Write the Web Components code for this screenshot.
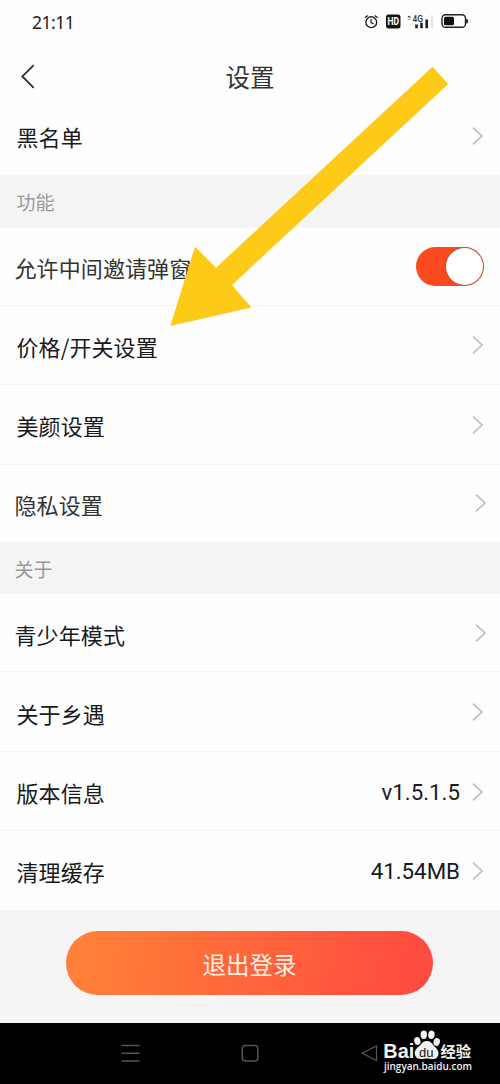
<!DOCTYPE html>
<html lang="zh-CN">
<head>
<meta charset="utf-8">
<title>设置</title>
<style>
html,body{margin:0;padding:0}
body{width:500px;height:1084px;overflow:hidden;background:#fefefe;font-family:Roboto,"Noto Sans CJK SC",sans-serif;color:#17191f}
</style>
</head>
<body>
<settings-screen></settings-screen>
<script>
const define = (name, html, setup) => {
  const template = document.createElement('template');
  template.innerHTML = html;
  customElements.define(name, class extends HTMLElement {
    constructor() {
      super();
      this.attachShadow({mode: 'open'}).append(template.content.cloneNode(true));
    }
    connectedCallback() { if (setup) setup(this); }
  });
};

define('status-bar', `
<style>
:host{display:flex;align-items:center;justify-content:space-between;height:44px;padding:0 31px 0 32px;box-sizing:border-box;color:#222}
.time{font:17.5px/20px "Noto Sans",sans-serif;letter-spacing:-.5px}
svg{display:block}
</style>
<span class="time">21:11</span>
<svg width="106" height="20" viewBox="363 13 106 20" fill="none" stroke="#222">
  <circle cx="371.3" cy="23.2" r="5.4" stroke-width="1.4"/>
  <path d="M371 20v3.5l2.7 1.500M365 18.700l2.800-2.300M377.600 18.700l-2.800-2.300" stroke-width="1.300"/>
  <rect x="386" y="15.500" width="14.500" height="14" rx="2.500" fill="#151515" stroke="none"/>
  <text x="393.200" y="26.200" text-anchor="middle" font-family="Roboto" font-weight="700" font-size="10" textLength="11.500" lengthAdjust="spacingAndGlyphs" fill="#fff" stroke="none">HD</text>
  <path d="M407.300 18.500l1.900-2 1.900 2z" fill="#333" stroke="none"/>
  <path d="M407.800 20.600h2.800" stroke="#aaa"/>
  <text x="412.500" y="22.500" font-family="Roboto" font-weight="500" font-size="9.300" textLength="10.500" lengthAdjust="spacingAndGlyphs" fill="#333" stroke="none">4G</text>
  <path d="M416.500 25.500v3.700M421.500 23.700v5.500M426.700 20.500v8.700" stroke-width="2.600"/>
  <path d="M432 16v13" stroke="#ddd" stroke-width="1.600"/>
  <rect x="442" y="15.800" width="23.500" height="12.500" rx="3.600" stroke-width="1.400"/>
  <rect x="444" y="17.800" width="10" height="8.500" rx="1.500" fill="#111" stroke="none"/>
  <path d="M467 20.200v4" stroke-width="1.800"/>
</svg>`);

define('nav-header', `
<style>
:host{display:grid;grid-template-columns:60px 1fr 60px;align-items:center;height:53px;padding-top:13px;box-sizing:border-box}
svg{display:block;margin-left:20px}
h1{margin:0;padding-top:1px;text-align:center;font:400 24.5px/36px "Noto Sans CJK SC",sans-serif;color:#333}
</style>
<svg width="16" height="26" viewBox="0 0 16 26" fill="none" stroke="#333" stroke-width="1.9" stroke-linecap="round"><path d="M13.2 1.6L2.4 12.4l10.8 10.9"/></svg>
<h1><slot></slot></h1>`);

define('section-label', `
<style>
:host{display:flex;align-items:center;height:53px;padding:2px 0 0 var(--inset,16.5px);box-sizing:border-box;background:#f5f5f5;color:#999;font:19px/28px "Noto Sans CJK SC",sans-serif}
</style>
<slot></slot>`);

define('chevron-icon', `
<style>:host{display:block;width:12px;height:20px}svg{display:block}</style>
<svg width="12" height="20" viewBox="0 0 12 20" fill="none" stroke="#bdbdbd" stroke-width="1.6"><path d="M1 1.6l9 8.4-9 8.4"/></svg>`);

define('toggle-switch', `
<style>
:host{display:flex;justify-content:flex-end;width:68px;height:39px;padding:1px;border-radius:20px;box-sizing:border-box;background:#fb4a20}
i{display:block;width:37px;height:37px;border-radius:50%;background:#fff;box-shadow:0 0 0 .7px #a8553e}
</style><i></i>`);

define('setting-row', `
<style>
:host{display:flex;align-items:center;height:79px;padding:1px var(--end,16px) 0 var(--inset,16.5px);box-sizing:border-box;border-bottom:1px solid #f3f3f3}
:host([last]){border-bottom-color:transparent}
.label{flex:1;padding-top:1px;white-space:nowrap;font:22px/32px "Noto Sans CJK SC",sans-serif;letter-spacing:.1px}
.value{margin-right:12px;padding-top:1px;font-size:22.3px;line-height:32px}
</style>
<span class="label"><slot></slot></span><span class="value"></span><slot name="control"><chevron-icon></chevron-icon></slot>`,
el => { el.shadowRoot.querySelector('.value').textContent = el.getAttribute('value') || ''; });

define('logout-button', `
<style>
:host{display:flex;justify-content:center;height:113px;padding:21px 1px 0 0;box-sizing:border-box;background:#f5f5f5}
button{width:367px;height:64px;padding:1px 0 0;border:0;border-radius:32px;background:linear-gradient(100deg,#ff8038 5%,#ff4b40 95%);color:#fff0e4;font:23.5px/34px "Noto Sans CJK SC",sans-serif}
</style>
<button><slot></slot></button>`);

define('system-nav', `
<style>:host{display:block;height:61px;background:#000}svg{display:block}</style>
<svg width="500" height="61" viewBox="0 1023 500 61" fill="none" stroke="#555" stroke-width="1.5">
  <path d="M121.500 1045.500h18M121.500 1053.300h18M121.500 1061h18"/>
  <rect x="242.300" y="1045.500" width="15.500" height="15.500" rx="3"/>
  <path d="M376.500 1046v14.600l-14.500-7.300z" stroke-width="1.200"/>
  <g stroke="none" fill="#f2f2f2">
    <text x="383.300" y="1057.500" font-family="Liberation Sans" font-weight="700" font-size="20" textLength="31" lengthAdjust="spacingAndGlyphs">Bai</text>
    <ellipse cx="417.300" cy="1041" rx="3.100" ry="3.900" transform="rotate(-15 417.300 1041)"/>
    <ellipse cx="423.800" cy="1034.700" rx="3.200" ry="4.200"/>
    <ellipse cx="431.400" cy="1034.800" rx="3.200" ry="4.200" transform="rotate(8 431.400 1034.800)"/>
    <ellipse cx="436.700" cy="1042" rx="3.200" ry="3.900" transform="rotate(15 436.700 1042)"/>
    <path d="M427 1041c3 0 4.800 1.800 6.200 4 2.300 2.800 5.300 4.300 5.300 8.200 0 3.500-2.300 5.800-5.700 5.800-2.200 0-3.500-.6-5.900-.6s-3.800.6-6.200.6c-3.700 0-5.900-2.400-5.900-5.900 0-4 3.300-5.500 5.700-8.300 1.600-2.200 3.500-3.800 6.500-3.800z"/>
    <text x="419" y="1056.500" font-family="Liberation Sans" font-weight="400" font-size="13.500" textLength="14.500" lengthAdjust="spacingAndGlyphs" fill="#111">du</text>
    <text x="440.400" y="1056.500" font-family="Liberation Sans, Noto Sans CJK SC, sans-serif" font-weight="700" font-size="15.300">经验</text>
    <text x="384" y="1069.700" font-family="Open Sans" font-weight="600" font-size="11.200" textLength="88" lengthAdjust="spacingAndGlyphs">jingyan.baidu.com</text>
  </g>
</svg>`);

define('pointer-arrow', `
<style>:host{position:absolute;left:170px;top:66px;pointer-events:none}svg{display:block}</style>
<svg width="280" height="262" viewBox="170 66 280 262"><path d="M170.300 326L195 246.700l21 21L432.600 66.700 448.200 83.900 232 285l19.400 22.400z" fill="#fdca18"/></svg>`);

define('settings-screen', `
<style>
:host{display:flex;flex-direction:column;position:relative;width:500px;height:1084px;overflow:hidden}
.h77{height:77px}.h78{height:78px}.h80{height:80px}
.in{--inset:14.5px;--end:13px}
.soft{color:#333}
.toggle{--inset:14.5px;--end:16px}
</style>
<status-bar></status-bar>
<nav-header>设置</nav-header>
<setting-row class="h78" last>黑名单</setting-row>
<section-label>功能</section-label>
<setting-row class="h78 toggle soft">允许中间邀请弹窗<toggle-switch slot="control"></toggle-switch></setting-row>
<setting-row>价格/开关设置</setting-row>
<setting-row class="h80">美颜设置</setting-row>
<setting-row class="h77 in soft" last>隐私设置</setting-row>
<section-label class="in">关于</section-label>
<setting-row class="h78 in">青少年模式</setting-row>
<setting-row class="h80">关于乡遇</setting-row>
<setting-row value="v1.5.1.5">版本信息</setting-row>
<setting-row value="41.54MB" last>清理缓存</setting-row>
<logout-button>退出登录</logout-button>
<system-nav></system-nav>
<pointer-arrow></pointer-arrow>`);
</script>
</body>
</html>
